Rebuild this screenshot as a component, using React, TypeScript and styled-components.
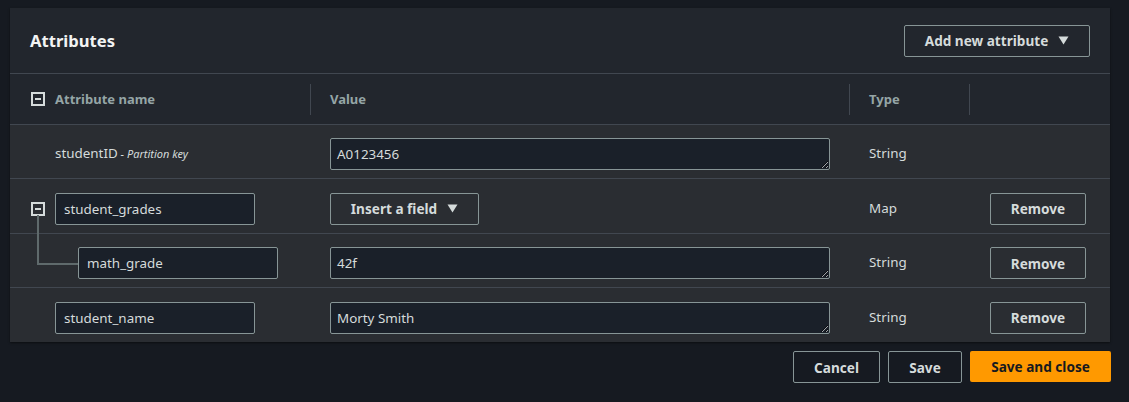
import { createGlobalStyle, styled } from "styled-components";

const GlobalStyle = createGlobalStyle`
  html, body {
    margin: 0;
    background: #161a21;
    font-family: "Noto Sans", "Open Sans", sans-serif;
    color: #d5dbdb;
  }
  * {
    box-sizing: border-box;
  }
`;

const COLUMNS = "300px 539px 120px 1fr";

const MinusBox = () => (
  <svg width="14" height="14" viewBox="0 0 14 14">
    <rect x="1" y="1" width="12" height="12" fill="none" stroke="#d5dbdb" strokeWidth="2" />
    <rect x="4" y="6" width="6" height="2" fill="#d5dbdb" />
  </svg>
);

const Caret = () => (
  <svg width="11" height="9" viewBox="0 0 11 9">
    <path d="M0.5 0.5 H10.5 L5.5 8.5 Z" fill="#d5dbdb" />
  </svg>
);

export default function App() {
  return (
    <Page>
      <GlobalStyle />
      <Panel>
        <Header>
          <Title>Attributes</Title>
          <Button $width={186}>
            Add new attribute <Caret />
          </Button>
        </Header>

        <HeadRow>
          <HeadCell>
            <MinusBox />
            Attribute name
          </HeadCell>
          <HeadCell $divider>Value</HeadCell>
          <HeadCell $divider>Type</HeadCell>
          <HeadCell $divider />
        </HeadRow>

        <Row $height={54}>
          <KeyCell>
            studentID<KeyNote> - Partition key</KeyNote>
          </KeyCell>
          <Cell>
            <ValueArea defaultValue="A0123456" rows={1} />
          </Cell>
          <TextCell>String</TextCell>
          <Cell />
        </Row>

        <Row $height={55}>
          <NameCell $indent={21}>
            <MinusBox />
            <NameInput defaultValue="student_grades" />
          </NameCell>
          <Cell>
            <Button $width={149}>
              Insert a field <Caret />
            </Button>
          </Cell>
          <TextCell>Map</TextCell>
          <ActionCell>
            <Button $width={96}>Remove</Button>
          </ActionCell>
        </Row>

        <Row $height={54}>
          <NameCell $indent={68}>
            <Connector />
            <NameInput defaultValue="math_grade" />
          </NameCell>
          <Cell>
            <ValueArea defaultValue="42f" rows={1} />
          </Cell>
          <TextCell>String</TextCell>
          <ActionCell>
            <Button $width={96}>Remove</Button>
          </ActionCell>
        </Row>

        <Row $height={54} $last>
          <NameCell $indent={45}>
            <NameInput defaultValue="student_name" />
          </NameCell>
          <Cell>
            <ValueArea defaultValue="Morty Smith" rows={1} />
          </Cell>
          <TextCell>String</TextCell>
          <ActionCell>
            <Button $width={96}>Remove</Button>
          </ActionCell>
        </Row>
      </Panel>

      <Footer>
        <Button $width={87}>Cancel</Button>
        <Button $width={74}>Save</Button>
        <PrimaryButton>Save and close</PrimaryButton>
      </Footer>
    </Page>
  );
}

const Page = styled.div`
  padding: 8px 0 0 10px;
  width: 1111px;
`;

const Panel = styled.div`
  width: 1100px;
  background: #2a2d32;
  box-shadow: 0 1px 2px rgba(0, 0, 0, 0.5);
`;

const Header = styled.div`
  height: 66px;
  display: flex;
  align-items: center;
  justify-content: space-between;
  padding: 0 20px;
  background: #22262d;
  border-bottom: 1px solid #414750;
`;

const Title = styled.h2`
  margin: 0;
  font-size: 16.6px;
  font-weight: 700;
  color: #f2f3f3;
  padding-bottom: 1px;
`;

const HeadRow = styled.div`
  display: grid;
  grid-template-columns: ${COLUMNS};
  height: 51px;
  background: #22262d;
  border-bottom: 1px solid #414750;
`;

const HeadCell = styled.div<{ $divider?: boolean }>`
  display: flex;
  align-items: center;
  gap: 10px;
  padding-left: ${(p) => (p.$divider ? "20px" : "21px")};
  font-size: 13px;
  font-weight: 700;
  color: #95a5a6;
  position: relative;

  &::before {
    content: "";
    display: ${(p) => (p.$divider ? "block" : "none")};
    position: absolute;
    left: 0;
    top: 10px;
    bottom: 9px;
    width: 1px;
    background: #414750;
  }
`;

const Row = styled.div<{ $height: number; $last?: boolean }>`
  display: grid;
  grid-template-columns: ${COLUMNS};
  height: ${(p) => p.$height}px;
  border-bottom: ${(p) => (p.$last ? "none" : "1px solid #414750")};
`;

const Cell = styled.div`
  display: flex;
  align-items: center;
  padding: 5px 19px 0 20px;
  font-size: 13.4px;
  color: #d5dbdb;
`;

const TextCell = styled(Cell)`
  padding-top: 3px;
`;

const KeyCell = styled(TextCell)`
  padding-left: 45px;
  white-space: pre;
`;

const NameCell = styled(Cell)<{ $indent: number }>`
  position: relative;
  gap: 10px;
  padding-left: ${(p) => p.$indent}px;
`;

const ActionCell = styled(Cell)`
  padding-left: 21px;
`;

const KeyNote = styled.span`
  font-size: 11px;
  font-style: italic;
`;

const Connector = styled.span`
  position: absolute;
  left: 27px;
  top: -19px;
  width: 41px;
  height: 50px;
  border-left: 2px solid #5f6a6c;
  border-bottom: 2px solid #5f6a6c;
`;

const NameInput = styled.input`
  width: 200px;
  height: 32px;
  padding: 0 8px;
  background: #1a2029;
  border: 1px solid #879596;
  border-radius: 2px;
  color: #d5dbdb;
  font-family: inherit;
  font-size: 13.4px;
  outline: none;
`;

const ValueArea = styled.textarea`
  width: 500px;
  height: 32px;
  padding: 6px 6px;
  line-height: 18px;
  background: #1a2029;
  border: 1px solid #879596;
  border-radius: 2px;
  color: #d5dbdb;
  font-family: inherit;
  font-size: 13.4px;
  resize: vertical;
  outline: none;
  overflow: hidden;
`;

const Button = styled.button<{ $width: number }>`
  display: inline-flex;
  align-items: center;
  justify-content: center;
  gap: 10px;
  width: ${(p) => p.$width}px;
  height: 32px;
  padding: 0;
  background: transparent;
  border: 1px solid #879596;
  border-radius: 2px;
  color: #d5dbdb;
  font-family: inherit;
  font-size: 13.6px;
  font-weight: 700;
  cursor: pointer;
`;

const Footer = styled.div`
  display: flex;
  justify-content: flex-end;
  gap: 8px;
  margin-top: 9px;
  width: 1101px;
`;

const PrimaryButton = styled.button`
  width: 141px;
  height: 31px;
  background: #ff9900;
  border: none;
  border-radius: 2px;
  color: #16191f;
  font-family: inherit;
  font-size: 13.6px;
  font-weight: 700;
  cursor: pointer;
`;
